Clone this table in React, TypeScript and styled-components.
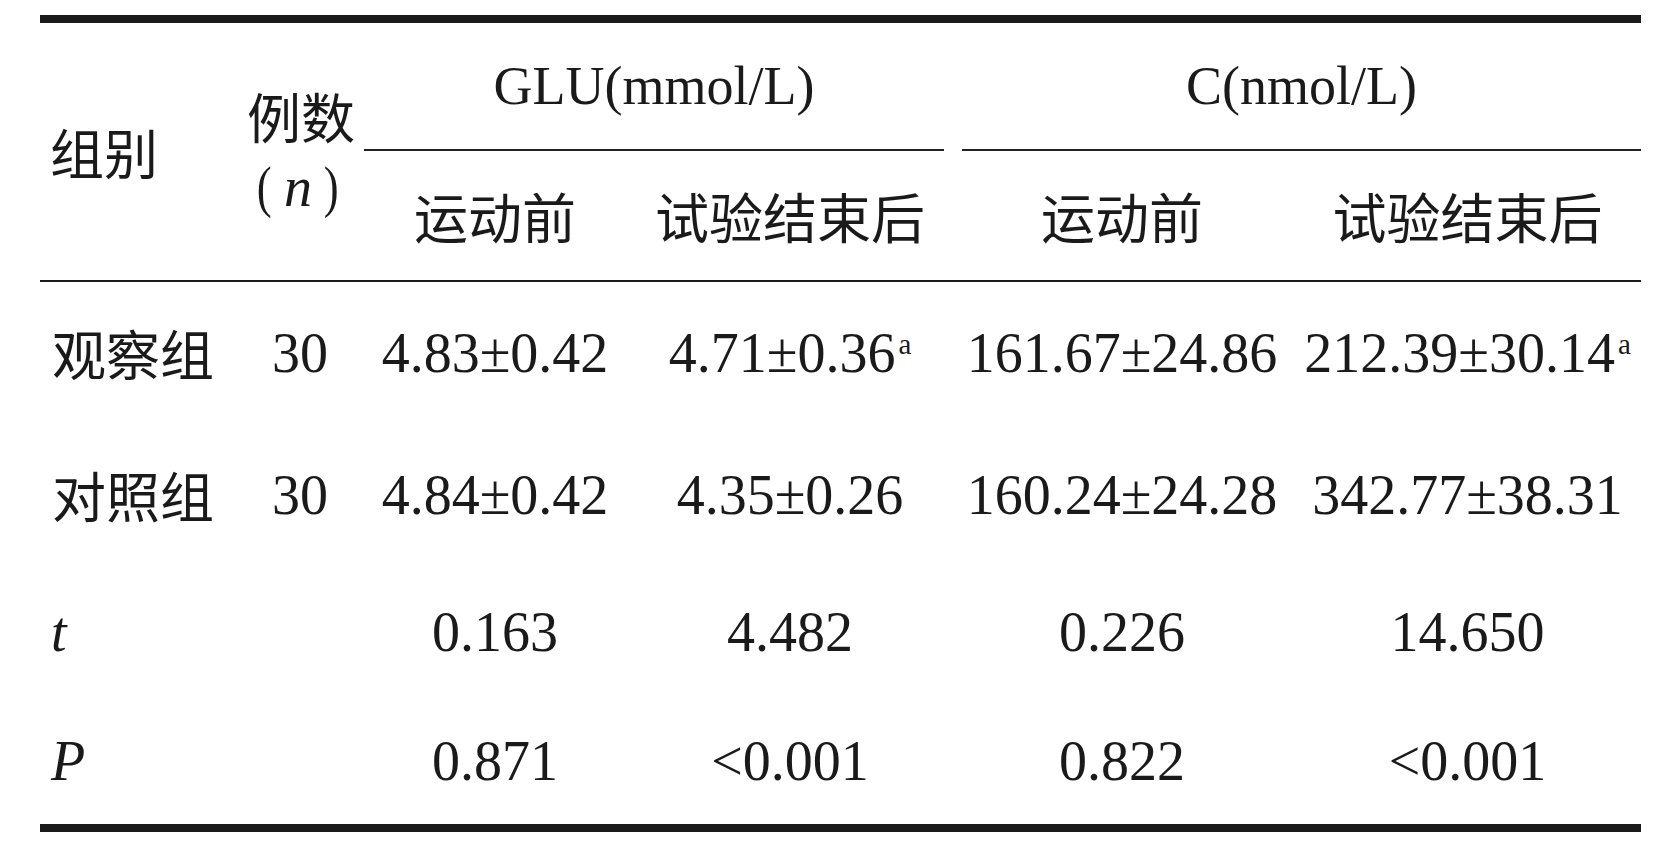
import { createGlobalStyle } from "styled-components";
import styled from "styled-components";

const GlobalStyle = createGlobalStyle`
  body {
    margin: 0;
    background: #fff;
    color: #1a1a1a;
  }
`;

const COLS = "200px 120px 270px 320px 344px 347px";
const CJK = `"Noto Sans CJK SC", "Liberation Serif", serif`;
const LATIN = `"Liberation Serif", "Noto Sans CJK SC", serif`;

interface Row {
  group: string;
  italic?: boolean;
  n?: string;
  cells: { value: string; mark?: boolean }[];
  height: number;
}

const rows: Row[] = [
  {
    group: "观察组",
    n: "30",
    height: 142,
    cells: [
      { value: "4.83±0.42" },
      { value: "4.71±0.36", mark: true },
      { value: "161.67±24.86" },
      { value: "212.39±30.14", mark: true },
    ],
  },
  {
    group: "对照组",
    n: "30",
    height: 142,
    cells: [
      { value: "4.84±0.42" },
      { value: "4.35±0.26" },
      { value: "160.24±24.28" },
      { value: "342.77±38.31" },
    ],
  },
  {
    group: "t",
    italic: true,
    height: 132,
    cells: [{ value: "0.163" }, { value: "4.482" }, { value: "0.226" }, { value: "14.650" }],
  },
  {
    group: "P",
    italic: true,
    height: 126,
    cells: [{ value: "0.871" }, { value: "<0.001" }, { value: "0.822" }, { value: "<0.001" }],
  },
];

export default function App() {
  return (
    <>
      <GlobalStyle />
      <Page>
        <Table>
          <Head>
            <RowLabel>组别</RowLabel>
            <CountLabel>
              <span>例数</span>
              <CountSub>
                <Paren>(</Paren>
                <Em>n</Em>
                <Paren>)</Paren>
              </CountSub>
            </CountLabel>
            <Group $col="3 / 5" $ml={4} $mr={6}>
              GLU(mmol/L)
            </Group>
            <Group $col="5 / 7" $ml={12} $mr={0}>
              C(nmol/L)
            </Group>
            <SubLabel $col={3}>运动前</SubLabel>
            <SubLabel $col={4}>试验结束后</SubLabel>
            <SubLabel $col={5}>运动前</SubLabel>
            <SubLabel $col={6}>试验结束后</SubLabel>
          </Head>
          {rows.map((r) => (
            <BodyRow key={r.group} $h={r.height}>
              <GroupName $italic={r.italic}>{r.group}</GroupName>
              <Num>{r.n ?? ""}</Num>
              {r.cells.map((c, i) => (
                <Num key={i}>
                  {c.value}
                  {c.mark && <Sup>a</Sup>}
                </Num>
              ))}
            </BodyRow>
          ))}
        </Table>
      </Page>
    </>
  );
}

const Page = styled.div`
  padding: 15px 0 0 40px;
`;

const Table = styled.div`
  width: 1601px;
  border-top: 8px solid #1a1a1a;
  border-bottom: 8px solid #1a1a1a;
`;

const Head = styled.div`
  display: grid;
  grid-template-columns: ${COLS};
  grid-template-rows: 128px 129px;
  border-bottom: 2px solid #1a1a1a;
`;

const RowLabel = styled.div`
  grid-row: 1 / 3;
  grid-column: 1;
  display: flex;
  align-items: center;
  padding-left: 10px;
  font-family: ${CJK};
  font-size: 54px;
  line-height: 1;
`;

const CountLabel = styled.div`
  grid-row: 1 / 3;
  grid-column: 2;
  display: flex;
  flex-direction: column;
  align-items: center;
  justify-content: center;
  gap: 16px;
  font-family: ${CJK};
  font-size: 54px;
  line-height: 1;
  padding-left: 2px;
`;

const CountSub = styled.span`
  display: flex;
  align-items: center;
  gap: 10px;
  margin-left: -6px;
`;

const Paren = styled.span`
  font-family: "Liberation Serif", serif;
  font-size: 56px;
  font-weight: 300;
  transform: scaleX(0.8);
`;

const Em = styled.span`
  font-family: "Liberation Serif", serif;
  font-style: italic;
  font-size: 56px;
`;

const Group = styled.div<{ $col: string; $ml: number; $mr: number }>`
  grid-row: 1;
  grid-column: ${(p) => p.$col};
  margin: 0 ${(p) => p.$mr}px 0 ${(p) => p.$ml}px;
  border-bottom: 2px solid #222;
  display: flex;
  align-items: center;
  justify-content: center;
  font-family: ${LATIN};
  font-size: 54px;
  line-height: 1;
`;

const SubLabel = styled.div<{ $col: number }>`
  grid-row: 2;
  grid-column: ${(p) => p.$col};
  display: flex;
  align-items: center;
  justify-content: center;
  font-family: ${CJK};
  font-size: 54px;
  line-height: 1;
`;

const BodyRow = styled.div<{ $h: number }>`
  display: grid;
  grid-template-columns: ${COLS};
  height: ${(p) => p.$h}px;
  align-items: center;
`;

const GroupName = styled.div<{ $italic?: boolean }>`
  padding-left: ${(p) => (p.$italic ? 11 : 12)}px;
  font-family: ${(p) => (p.$italic ? `"Liberation Serif", serif` : CJK)};
  font-style: ${(p) => (p.$italic ? "italic" : "normal")};
  font-size: ${(p) => (p.$italic ? 56 : 54)}px;
  line-height: 1;
`;

const Num = styled.div`
  text-align: center;
  font-family: "Liberation Serif", serif;
  font-size: 56px;
  line-height: 1;
  white-space: nowrap;
`;

const Sup = styled.span`
  font-size: 29px;
  vertical-align: 18px;
  margin-left: 3px;
`;
